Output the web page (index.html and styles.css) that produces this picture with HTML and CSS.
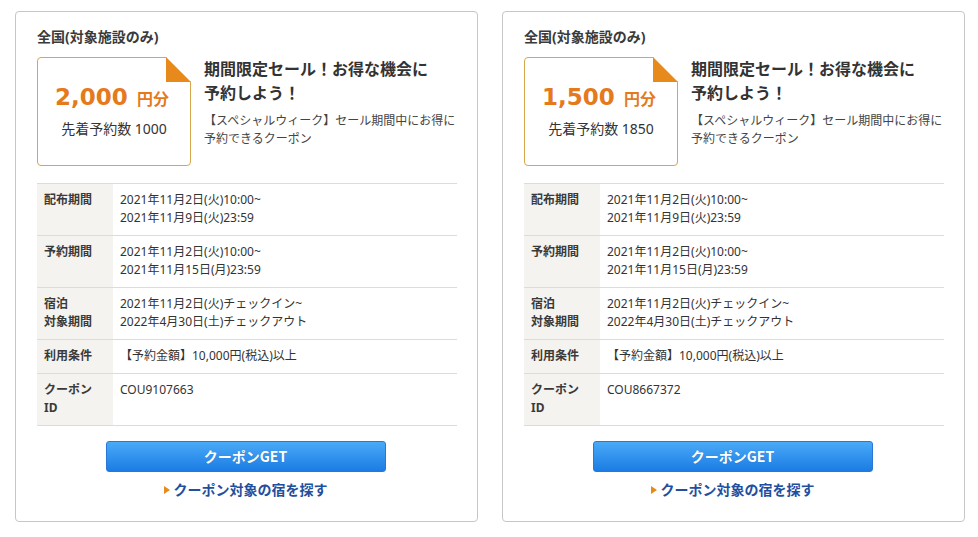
FILE: index.html
```html
<!DOCTYPE html>
<html lang="ja">
<head>
<meta charset="utf-8">
<link rel="stylesheet" href="styles.css">
</head>
<body>
<div class="cards">
  <div class="card">
    <div class="area">全国(対象施設のみ)</div>
    <div class="top">
      <div class="ticket">
        <svg class="fold" width="25" height="25" viewBox="0 0 25 25"><polygon points="0,0 25,0 25,25" fill="#fff"/><polygon points="0,0 25,25 0,25" fill="#e8891c"/></svg>
        <div class="price"><span class="num">2,000</span><span class="unit">円分</span></div>
        <div class="count">先着予約数 1000</div>
      </div>
      <div class="info">
        <div class="title">期間限定セール！お得な機会に<br>予約しよう！</div>
        <div class="desc">【スペシャルウィーク】セール期間中にお得に<br>予約できるクーポン</div>
      </div>
    </div>
    <table class="detail">
      <tr><th>配布期間</th><td>2021年11月2日(火)10:00~<br>2021年11月9日(火)23:59</td></tr>
      <tr><th>予約期間</th><td>2021年11月2日(火)10:00~<br>2021年11月15日(月)23:59</td></tr>
      <tr><th>宿泊<br>対象期間</th><td>2021年11月2日(火)チェックイン~<br>2022年4月30日(土)チェックアウト</td></tr>
      <tr><th>利用条件</th><td>【予約金額】10,000円(税込)以上</td></tr>
      <tr><th>クーポン<br>ID</th><td>COU9107663</td></tr>
    </table>
    <a class="get">クーポンGET</a>
    <a class="search"><span class="tri"></span>クーポン対象の宿を探す</a>
  </div>
  <div class="card">
    <div class="area">全国(対象施設のみ)</div>
    <div class="top">
      <div class="ticket">
        <svg class="fold" width="25" height="25" viewBox="0 0 25 25"><polygon points="0,0 25,0 25,25" fill="#fff"/><polygon points="0,0 25,25 0,25" fill="#e8891c"/></svg>
        <div class="price"><span class="num">1,500</span><span class="unit">円分</span></div>
        <div class="count">先着予約数 1850</div>
      </div>
      <div class="info">
        <div class="title">期間限定セール！お得な機会に<br>予約しよう！</div>
        <div class="desc">【スペシャルウィーク】セール期間中にお得に<br>予約できるクーポン</div>
      </div>
    </div>
    <table class="detail">
      <tr><th>配布期間</th><td>2021年11月2日(火)10:00~<br>2021年11月9日(火)23:59</td></tr>
      <tr><th>予約期間</th><td>2021年11月2日(火)10:00~<br>2021年11月15日(月)23:59</td></tr>
      <tr><th>宿泊<br>対象期間</th><td>2021年11月2日(火)チェックイン~<br>2022年4月30日(土)チェックアウト</td></tr>
      <tr><th>利用条件</th><td>【予約金額】10,000円(税込)以上</td></tr>
      <tr><th>クーポン<br>ID</th><td>COU8667372</td></tr>
    </table>
    <a class="get">クーポンGET</a>
    <a class="search"><span class="tri"></span>クーポン対象の宿を探す</a>
  </div>
</div>
</body>
</html>
```

FILE: styles.css
```css
* { box-sizing: border-box; }
html, body { margin: 0; padding: 0; background: #fff; }
body {
  font-family: "Noto Sans", "Noto Sans CJK JP", sans-serif;
  color: #333;
}
.cards {
  display: flex;
  gap: 24px;
  padding: 11px 0 0 15px;
}
.card {
  width: 463px;
  height: 511px;
  border: 1px solid #c6c6c6;
  border-radius: 4px;
  padding: 15px 19px 0 21px;
  display: flex;
  flex-direction: column;
}
.area {
  font-size: 14px;
  line-height: 20px;
  font-weight: 700;
  color: #3a3a3a;
}
.top {
  display: flex;
  gap: 13px;
  margin-top: 10px;
}
.ticket {
  position: relative;
  width: 154px;
  height: 109px;
  flex: none;
  border: 1px solid #d9a650;
  border-radius: 4px;
  display: flex;
  flex-direction: column;
  align-items: center;
  justify-content: center;
  padding: 0 0 2px 0;
}
.fold {
  position: absolute;
  top: -1px;
  right: -1px;
  display: block;
}
.price {
  color: #e57a1c;
  font-weight: 700;
  line-height: 30px;
  white-space: nowrap;
  margin-left: -4px;
}
.num {
  font-family: "DejaVu Sans", sans-serif;
  font-size: 23px;
}
.unit {
  font-family: "Noto Sans CJK JP", sans-serif;
  font-size: 16px;
  margin-left: 9px;
}
.count {
  font-size: 14px;
  line-height: 20px;
  margin-top: 5px;
  color: #333;
  white-space: nowrap;
}
.info { flex: 1; min-width: 0; }
.title {
  font-size: 16px;
  font-weight: 700;
  line-height: 24px;
  color: #333;
  white-space: nowrap;
}
.desc {
  margin-top: 7px;
  font-size: 12px;
  line-height: 18px;
  color: #444;
  white-space: nowrap;
}
.detail {
  margin-top: 17px;
  width: 420px;
  border-collapse: collapse;
  font-size: 12px;
  line-height: 18px;
}
.detail tr { border-top: 1px solid #dcdcdc; border-bottom: 1px solid #dcdcdc; }
.detail th {
  width: 76px;
  background: #f5f3ef;
  text-align: left;
  font-weight: 700;
  color: #3a3a3a;
  vertical-align: top;
  padding: 7px 7px 8px;
}
.detail td {
  vertical-align: top;
  padding: 7px 7px 8px;
  color: #333;
  white-space: nowrap;
}
.get {
  display: block;
  align-self: center;
  margin: 15px 0 0 -4px;
  width: 280px;
  height: 31px;
  border: 1px solid #2a78d6;
  border-radius: 3px;
  background: linear-gradient(#4aaaf8, #1b7ce4);
  color: #fff;
  font-family: "Noto Sans CJK JP", sans-serif;
  font-weight: 700;
  font-size: 14px;
  line-height: 29px;
  text-align: center;
  text-shadow: 0 0 1px rgba(0,0,0,0.2);
}
.search {
  display: flex;
  align-items: center;
  align-self: center;
  margin: 8px 0 0 -4px;
  font-size: 14px;
  line-height: 20px;
  font-weight: 700;
  color: #1f4f9e;
}
.tri {
  width: 0;
  height: 0;
  border-top: 4px solid transparent;
  border-bottom: 4px solid transparent;
  border-left: 6px solid #e8891c;
  margin-right: 4px;
}
```
